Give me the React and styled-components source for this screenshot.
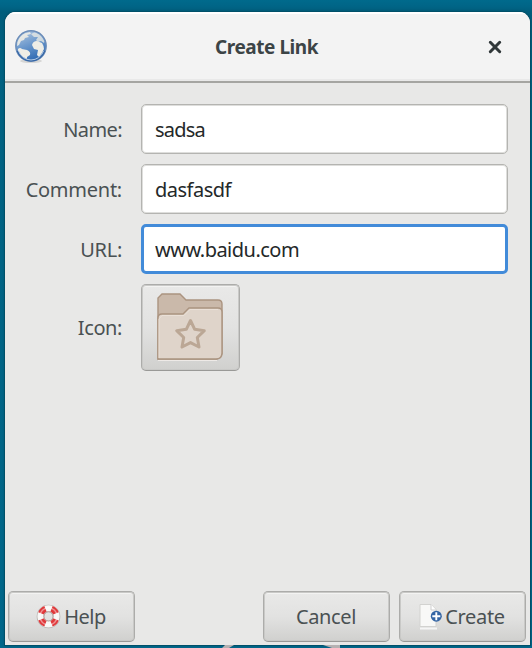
import React from "react";
import styled, { createGlobalStyle } from "styled-components";

const GlobalStyle = createGlobalStyle`
  * { box-sizing: border-box; }
  body { margin: 0; overflow: hidden; background: #006b8f; }
`;

const Desktop = styled.main`
  position: relative;
  width: 532px;
  height: 648px;
  padding: 12px 2px 3px 5px;
  background: linear-gradient(#006a8c, #006587 6px, #005d7b 12px, #006181 60px, #00678a);
  font-family: "Noto Sans", "Open Sans", sans-serif;
  font-size: 20px;
  color: #4a5153;
`;

const Wallpaper = styled.svg`
  position: absolute;
  left: 220px;
  bottom: 0;
`;

const Dialog = styled.section`
  height: 633px;
  display: flex;
  flex-direction: column;
  background: #e8e8e7;
  border-radius: 11px 11px 0 0;
  overflow: hidden;
  box-shadow: 0 0 0 1px #005069, 0 0 3px #00425a;
`;

const Header = styled.header`
  height: 71px;
  flex: none;
  display: grid;
  grid-template-columns: 52px 1fr 70px;
  align-items: center;
  background: #f3f3f3;
  border-bottom: 2px solid #a5a5a2;
  box-shadow: inset 0 2px #fff, inset 0 -2px #e9e9e9;
`;

const HeaderIcon = styled.svg`
  justify-self: center;
`;

const Title = styled.h1`
  margin: 0 0 0 16px;
  font-size: 19px;
  line-height: 28px;
  letter-spacing: ${(p) => p.$spacing || 0}px;
  justify-self: center;
  color: #3c4446;
  white-space: nowrap;
`;

const CloseButton = styled.button`
  justify-self: center;
  display: flex;
  padding: 0;
  border: 0;
  background: none;
`;

const Form = styled.form`
  display: grid;
  grid-template-columns: 117px 367px;
  grid-template-rows: 51px 51px 51px 87px;
  column-gap: 19px;
  row-gap: 9px;
  padding-top: 21px;
`;

const Label = styled.label`
  align-self: center;
  justify-self: end;
  line-height: 28px;
  letter-spacing: ${(p) => p.$spacing || 0}px;
  white-space: nowrap;
`;

const Entry = styled.input`
  width: 367px;
  height: 50px;
  outline: 0;
  padding: 0 0 0 ${(p) => (p.$active ? 11 : 13)}px;
  border: ${(p) => (p.$active ? "3px solid #428bd9" : "1px solid #b4b4b1")};
  border-radius: 5px;
  background: #fff;
  box-shadow: ${(p) => (p.$active ? "none" : "inset 0 0 0 1px #dededc")};
  color: #242829;
  font: inherit;
  letter-spacing: ${(p) => p.$spacing || 0}px;
`;

const Button = styled.button`
  width: ${(p) => p.$width || 127}px;
  height: ${(p) => p.$height || 51}px;
  flex: none;
  display: flex;
  align-items: center;
  justify-content: center;
  padding: 0 1px 1px 0;
  border: 1px solid #acacaa;
  border-bottom-color: #999997;
  border-radius: 5px;
  background: linear-gradient(#e9e9e8, #e2e2e1 50%, #d0d0ce);
  box-shadow: inset 0 0 0 1px #c9c9c7, inset 0 2px #f3f3f2;
  color: inherit;
  font: inherit;
  letter-spacing: ${(p) => p.$spacing || 0}px;
`;

const IconButton = styled(Button)`
  padding: 0 0 1px;
`;

const ButtonIcon = styled.svg`
  flex: none;
  margin-right: 3px;
`;

const Actions = styled.footer`
  display: flex;
  gap: 9px;
  margin-top: auto;
  padding: 0 4px 3px 3px;
`;

const Spacer = styled.div`
  flex: 1;
`;

function Globe() {
  return (
    <HeaderIcon width="34" height="36" viewBox="0 0 34 36">
      <defs>
        <linearGradient id="sea" x2="0.4" y2="1">
          <stop stopColor="#b7cbe2" />
          <stop offset=".55" stopColor="#6b98cc" />
          <stop offset="1" stopColor="#346eb5" />
        </linearGradient>
        <clipPath id="disc"><circle cx="17" cy="17" r="14" /></clipPath>
      </defs>
      <ellipse cx="17" cy="32" rx="11" ry="2" fill="#d6d6d5" />
      <circle cx="17" cy="17" r="15.2" fill="url(#sea)" stroke="#6c8db8" strokeWidth="1.4" />
      <g clipPath="url(#disc)" fill="#eeede6">
        <path d="M3 13Q5 7 10 4L16 3 17 5 13 6 15 8 11 9 10 11 7 12 5 16 3 17Z" opacity=".9" />
        <path d="M4 20Q6 18 8 20L13 21Q17 23 16 26L13 28 13 31 8 29 4 24Z" />
        <path d="M17 5 21 3 27 6 31 12 30 14 27 12 24 13 22 11 24 8 20 8Z" opacity=".75" />
        <path d="M18 16Q19 12 23 12L28 14Q30 17 30 20L28 24 25 28 23 26 24 21 20 20Z" />
      </g>
      <path d="M3.5 22A14.3 14.3 0 0 0 30.5 22" fill="none" stroke="#3566a5" strokeWidth="1.8" />
      <path d="M4.5 22A13.2 13.2 0 0 0 29.5 22" fill="none" stroke="#b4cbe6" strokeWidth="1" />
    </HeaderIcon>
  );
}

function Folder() {
  return (
    <svg width="68" height="69" viewBox="0 0 68 69">
      <path d="M1 66V5L5 1H23L29 7H61Q65 7 65 11V61L60 66Z" fill="#cab9aa" stroke="#ab9480" strokeWidth="1.4" />
      <path d="M1 66V25Q1 21 5 21H26L32 15H61Q65 15 65 19V60Q65 66 59 66Z" fill="#dfd4ca" stroke="#ab9480" strokeWidth="1.4" />
      <path d="M2 65V26L5 22.5H27L33 16.5H61" fill="none" stroke="#eae0d7" />
      <path d="M33.5 27.5 37.7 36.3 47.3 37.7 40.3 44.5 42 54 33.5 49.6 25 54 26.7 44.5 19.7 37.7 29.3 36.3Z" fill="none" stroke="#bba795" strokeWidth="3" strokeLinejoin="round" />
      <path d="M1 67.5H60" stroke="#eeeae7" />
    </svg>
  );
}

function Lifebuoy() {
  return (
    <ButtonIcon width="25" height="25" viewBox="0 0 25 25">
      <circle cx="12.5" cy="12.5" r="8" fill="none" stroke="#b4b1ae" strokeWidth="7.6" />
      <circle cx="12.5" cy="12.3" r="8" fill="none" stroke="#f8f7f5" strokeWidth="6.2" />
      <g fill="none" stroke="#e0393b" strokeWidth="6.2">
        <path d="M5.1 9.3A8 8 0 0 1 9.5 4.9M15.5 4.9A8 8 0 0 1 19.9 9.3M19.9 15.3A8 8 0 0 1 15.5 19.7M9.5 19.7A8 8 0 0 1 5.1 15.3" />
      </g>
      <circle cx="12.5" cy="12.3" r="8.6" fill="none" stroke="#fff" strokeWidth="1.4" opacity=".45" />
      <circle cx="12.5" cy="12.3" r="4.7" fill="none" stroke="#bc9f9c" strokeWidth="1" />
    </ButtonIcon>
  );
}

function NewDocument() {
  return (
    <ButtonIcon width="23" height="27" viewBox="0 0 23 27">
      <path d="M1 1.5H12L17 6.5V23.5H1Z" fill="#f8f8f7" stroke="#d2d2d0" />
      <path d="M12 1.5V7H17" fill="#fff" stroke="#cecece" />
      <path d="M1 25.5H18" stroke="#f5f5f5" strokeWidth="2" />
      <circle cx="17.3" cy="13.2" r="5.5" fill="#3465a4" />
      <path d="M17.3 9.2V17.2M13.3 13.2H21.3" stroke="#fff" strokeWidth="1.9" />
    </ButtonIcon>
  );
}

export default function App() {
  return (
    <>
      <GlobalStyle />
      <Desktop>
        <Wallpaper width="124" height="4" viewBox="0 0 124 4">
          <path d="M2 4 5 1H14L9 4ZM103 1H120V4H112Z" fill="#b5b1b2" />
        </Wallpaper>
        <Dialog>
          <Header>
            <Globe />
            <Title $spacing={-0.45}>Create Link</Title>
            <CloseButton aria-label="Close">
              <svg width="14" height="14" viewBox="0 0 14 14">
                <path d="M2.3 2.3 11.7 11.7M11.7 2.3 2.3 11.7" stroke="#303739" strokeWidth="3" strokeLinecap="round" />
              </svg>
            </CloseButton>
          </Header>
          <Form>
            <Label $spacing={-0.6}>Name:</Label>
            <Entry $spacing={-0.8} defaultValue="sadsa" />
            <Label $spacing={-0.25}>Comment:</Label>
            <Entry $spacing={-0.5} defaultValue="dasfasdf" />
            <Label $spacing={-0.3}>URL:</Label>
            <Entry $active $spacing={-0.52} defaultValue="www.baidu.com" />
            <Label $spacing={-0.4}>Icon:</Label>
            <IconButton type="button" aria-label="Choose icon" $width={99} $height={87}><Folder /></IconButton>
          </Form>
          <Actions>
            <Button $spacing={-0.5}><Lifebuoy />Help</Button>
            <Spacer />
            <Button $spacing={-0.35}>Cancel</Button>
            <Button $spacing={-0.35}><NewDocument />Create</Button>
          </Actions>
        </Dialog>
      </Desktop>
    </>
  );
}
